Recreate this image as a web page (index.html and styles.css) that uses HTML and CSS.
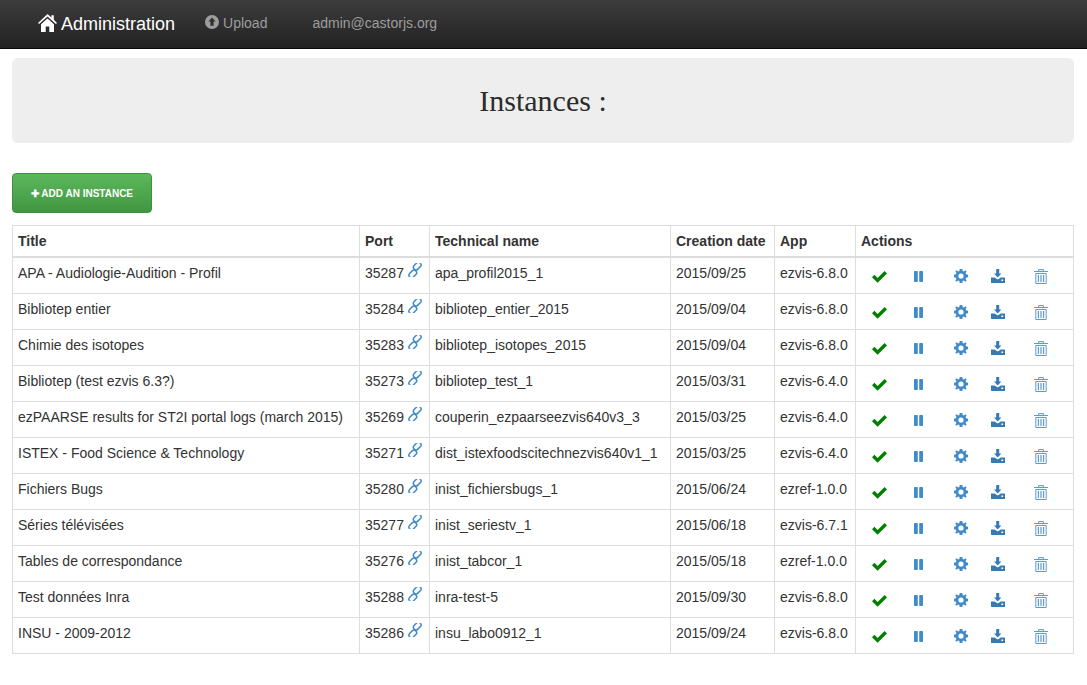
FILE: index.html
```html
<!DOCTYPE html>
<html lang="en">
<head>
    <meta charset="UTF-8">
    <title>Administration</title>
    <link rel="stylesheet" href="styles.css">
</head>
<body>
    <!-- Icon definitions, reused in each table row -->
    <svg class="icon-defs" width="0" height="0">
        <symbol id="i-link" viewBox="0 0 14 14">
            <g fill="none" stroke="currentColor" stroke-width="1.5">
                <rect x="6.6" y="-1.2" width="5.2" height="8.6" rx="2.6" transform="rotate(45 9.2 3.1)"/>
                <rect x="2.2" y="6.6" width="5.2" height="8.6" rx="2.6" transform="rotate(45 4.8 10.9)"/>
            </g>
        </symbol>
        <symbol id="i-check" viewBox="0 0 15 13">
            <path fill="currentColor" d="M0 7.2 2.4 4.8 5.6 8 12.6 1 15 3.4 5.6 12.8Z"/>
        </symbol>
        <symbol id="i-pause" viewBox="0 0 9 11">
            <path fill="currentColor" d="M0 .8Q0 0 .8 0H3Q3.8 0 3.8 .8V10.2Q3.8 11 3 11H.8Q0 11 0 10.2ZM5.2 .8Q5.2 0 6 0H8.2Q9 0 9 .8V10.2Q9 11 8.2 11H6Q5.2 11 5.2 10.2Z"/>
        </symbol>
        <symbol id="i-cog" viewBox="0 0 14 14">
            <path fill="currentColor" fill-rule="evenodd" d="M5.7 0H8.3L8.7 1.9 9.9 2.4 11.5 1.3 12.7 2.5 11.6 4.1 12.1 5.3 14 5.7V8.3L12.1 8.7 11.6 9.9 12.7 11.5 11.5 12.7 9.9 11.6 8.7 12.1 8.3 14H5.7L5.3 12.1 4.1 11.6 2.5 12.7 1.3 11.5 2.4 9.9 1.9 8.7 0 8.3V5.7L1.9 5.3 2.4 4.1 1.3 2.5 2.5 1.3 4.1 2.4 5.3 1.9ZM7 4.4A2.6 2.6 0 1 0 7 9.6 2.6 2.6 0 1 0 7 4.4Z"/>
        </symbol>
        <symbol id="i-download" viewBox="0 0 14 14">
            <path fill="currentColor" fill-rule="evenodd" d="M5.2 0H8.2V4.4H10.4L6.7 8.4 3 4.4H5.2ZM0 8.4H3.6L6.7 10.6 9.8 8.4H14V14H0ZM10.4 10.4V12H12.2V10.4Z"/>
        </symbol>
        <symbol id="i-trash" viewBox="0 0 14 15">
            <g fill="none" stroke="currentColor">
                <path d="M0 2.5H14M4.6 2.5V.6H9.4V2.5"/>
                <path d="M1.8 4.5H12.2V14.5H1.8Z"/>
                <path stroke-width="1.2" d="M4.4 6V13M7 6V13M9.6 6V13"/>
            </g>
        </symbol>
    </svg>

    <nav class="navbar">
        <a class="brand" href="#">
            <svg class="home-icon" viewBox="0 0 19 18"><path fill="currentColor" d="M9.5 0 13.4 3.6V1.2H15.8V5.8L19 8.9 17.9 10 9.5 2.4 1.1 10 0 8.9ZM3 10.2 9.5 4.4 16 10.2V18H11.3V12.6H7.7V18H3Z"/></svg>
            Administration
        </a>
        <a class="nav-link upload" href="#">
            <svg class="upload-icon" viewBox="0 0 14 14"><path fill="currentColor" fill-rule="evenodd" d="M7 0A7 7 0 1 0 7 14 7 7 0 1 0 7 0ZM7 2.4 10.6 6.6H8.6V10.8H5.4V6.6H3.4Z"/></svg>
            Upload
        </a>
        <a class="nav-link" href="#">admin@castorjs.org</a>
    </nav>

    <div class="jumbotron">
        <h1>Instances :</h1>
    </div>

    <button class="btn-add"><span class="plus">✚</span> Add an instance</button>

    <table class="instances">
        <thead>
            <tr>
                <th class="col-title">Title</th>
                <th class="col-port">Port</th>
                <th class="col-name">Technical name</th>
                <th class="col-date">Creation date</th>
                <th class="col-app">App</th>
                <th>Actions</th>
            </tr>
        </thead>
        <tbody>
            <tr>
                <td>APA - Audiologie-Audition - Profil</td>
                <td>35287 <a href="#"><svg class="link-icon"><use href="#i-link"/></svg></a></td>
                <td>apa_profil2015_1</td>
                <td>2015/09/25</td>
                <td>ezvis-6.8.0</td>
                <td><div class="actions"><svg class="a-check"><use href="#i-check"/></svg><svg class="a-pause"><use href="#i-pause"/></svg><svg class="a-cog"><use href="#i-cog"/></svg><svg class="a-download"><use href="#i-download"/></svg><svg class="a-trash"><use href="#i-trash"/></svg></div></td>
            </tr>
            <tr>
                <td>Bibliotep entier</td>
                <td>35284 <a href="#"><svg class="link-icon"><use href="#i-link"/></svg></a></td>
                <td>bibliotep_entier_2015</td>
                <td>2015/09/04</td>
                <td>ezvis-6.8.0</td>
                <td><div class="actions"><svg class="a-check"><use href="#i-check"/></svg><svg class="a-pause"><use href="#i-pause"/></svg><svg class="a-cog"><use href="#i-cog"/></svg><svg class="a-download"><use href="#i-download"/></svg><svg class="a-trash"><use href="#i-trash"/></svg></div></td>
            </tr>
            <tr>
                <td>Chimie des isotopes</td>
                <td>35283 <a href="#"><svg class="link-icon"><use href="#i-link"/></svg></a></td>
                <td>bibliotep_isotopes_2015</td>
                <td>2015/09/04</td>
                <td>ezvis-6.8.0</td>
                <td><div class="actions"><svg class="a-check"><use href="#i-check"/></svg><svg class="a-pause"><use href="#i-pause"/></svg><svg class="a-cog"><use href="#i-cog"/></svg><svg class="a-download"><use href="#i-download"/></svg><svg class="a-trash"><use href="#i-trash"/></svg></div></td>
            </tr>
            <tr>
                <td>Bibliotep (test ezvis 6.3?)</td>
                <td>35273 <a href="#"><svg class="link-icon"><use href="#i-link"/></svg></a></td>
                <td>bibliotep_test_1</td>
                <td>2015/03/31</td>
                <td>ezvis-6.4.0</td>
                <td><div class="actions"><svg class="a-check"><use href="#i-check"/></svg><svg class="a-pause"><use href="#i-pause"/></svg><svg class="a-cog"><use href="#i-cog"/></svg><svg class="a-download"><use href="#i-download"/></svg><svg class="a-trash"><use href="#i-trash"/></svg></div></td>
            </tr>
            <tr>
                <td>ezPAARSE results for ST2I portal logs (march 2015)</td>
                <td>35269 <a href="#"><svg class="link-icon"><use href="#i-link"/></svg></a></td>
                <td>couperin_ezpaarseezvis640v3_3</td>
                <td>2015/03/25</td>
                <td>ezvis-6.4.0</td>
                <td><div class="actions"><svg class="a-check"><use href="#i-check"/></svg><svg class="a-pause"><use href="#i-pause"/></svg><svg class="a-cog"><use href="#i-cog"/></svg><svg class="a-download"><use href="#i-download"/></svg><svg class="a-trash"><use href="#i-trash"/></svg></div></td>
            </tr>
            <tr>
                <td>ISTEX - Food Science &amp; Technology</td>
                <td>35271 <a href="#"><svg class="link-icon"><use href="#i-link"/></svg></a></td>
                <td>dist_istexfoodscitechnezvis640v1_1</td>
                <td>2015/03/25</td>
                <td>ezvis-6.4.0</td>
                <td><div class="actions"><svg class="a-check"><use href="#i-check"/></svg><svg class="a-pause"><use href="#i-pause"/></svg><svg class="a-cog"><use href="#i-cog"/></svg><svg class="a-download"><use href="#i-download"/></svg><svg class="a-trash"><use href="#i-trash"/></svg></div></td>
            </tr>
            <tr>
                <td>Fichiers Bugs</td>
                <td>35280 <a href="#"><svg class="link-icon"><use href="#i-link"/></svg></a></td>
                <td>inist_fichiersbugs_1</td>
                <td>2015/06/24</td>
                <td>ezref-1.0.0</td>
                <td><div class="actions"><svg class="a-check"><use href="#i-check"/></svg><svg class="a-pause"><use href="#i-pause"/></svg><svg class="a-cog"><use href="#i-cog"/></svg><svg class="a-download"><use href="#i-download"/></svg><svg class="a-trash"><use href="#i-trash"/></svg></div></td>
            </tr>
            <tr>
                <td>Séries télévisées</td>
                <td>35277 <a href="#"><svg class="link-icon"><use href="#i-link"/></svg></a></td>
                <td>inist_seriestv_1</td>
                <td>2015/06/18</td>
                <td>ezvis-6.7.1</td>
                <td><div class="actions"><svg class="a-check"><use href="#i-check"/></svg><svg class="a-pause"><use href="#i-pause"/></svg><svg class="a-cog"><use href="#i-cog"/></svg><svg class="a-download"><use href="#i-download"/></svg><svg class="a-trash"><use href="#i-trash"/></svg></div></td>
            </tr>
            <tr>
                <td>Tables de correspondance</td>
                <td>35276 <a href="#"><svg class="link-icon"><use href="#i-link"/></svg></a></td>
                <td>inist_tabcor_1</td>
                <td>2015/05/18</td>
                <td>ezref-1.0.0</td>
                <td><div class="actions"><svg class="a-check"><use href="#i-check"/></svg><svg class="a-pause"><use href="#i-pause"/></svg><svg class="a-cog"><use href="#i-cog"/></svg><svg class="a-download"><use href="#i-download"/></svg><svg class="a-trash"><use href="#i-trash"/></svg></div></td>
            </tr>
            <tr>
                <td>Test données Inra</td>
                <td>35288 <a href="#"><svg class="link-icon"><use href="#i-link"/></svg></a></td>
                <td>inra-test-5</td>
                <td>2015/09/30</td>
                <td>ezvis-6.8.0</td>
                <td><div class="actions"><svg class="a-check"><use href="#i-check"/></svg><svg class="a-pause"><use href="#i-pause"/></svg><svg class="a-cog"><use href="#i-cog"/></svg><svg class="a-download"><use href="#i-download"/></svg><svg class="a-trash"><use href="#i-trash"/></svg></div></td>
            </tr>
            <tr>
                <td>INSU - 2009-2012</td>
                <td>35286 <a href="#"><svg class="link-icon"><use href="#i-link"/></svg></a></td>
                <td>insu_labo0912_1</td>
                <td>2015/09/24</td>
                <td>ezvis-6.8.0</td>
                <td><div class="actions"><svg class="a-check"><use href="#i-check"/></svg><svg class="a-pause"><use href="#i-pause"/></svg><svg class="a-cog"><use href="#i-cog"/></svg><svg class="a-download"><use href="#i-download"/></svg><svg class="a-trash"><use href="#i-trash"/></svg></div></td>
            </tr>
        </tbody>
    </table>
</body>
</html>
```

FILE: styles.css
```css
/* Base */
body {
    margin: 0;
    font-family: "Liberation Sans", Arial, sans-serif;
    font-size: 14px;
    line-height: 20px;
    color: #333;
    background-color: #fff;
}

a {
    color: inherit;
    text-decoration: none;
}

.icon-defs {
    position: absolute;
}

/* Navbar */
.navbar {
    display: flex;
    align-items: flex-start;
    height: 48px;
    padding-left: 38px;
    background: linear-gradient(to bottom, #3c3c3c, #222);
    border-bottom: 1px solid #080808;
}

.brand {
    display: flex;
    align-items: center;
    gap: 4px;
    margin-top: 14px;
    color: #fff;
    font-size: 18px;
}

.home-icon {
    width: 19px;
    height: 18px;
    margin-top: -3px;
}

.nav-link {
    margin-top: 13px;
    margin-left: 30px;
    color: #9d9d9d;
}

.upload {
    display: flex;
    align-items: center;
    gap: 4px;
    margin-right: 15px;
}

.upload-icon {
    width: 14px;
    height: 14px;
    margin-top: -2px;
}

/* Page header */
.jumbotron {
    margin: 9px 13px 30px 12px;
    height: 85px;
    background-color: #eee;
    border-radius: 6px;
    display: flex;
    align-items: center;
    justify-content: center;
}

h1 {
    margin: 0;
    font-family: "Liberation Serif", serif;
    font-size: 30px;
    font-weight: normal;
    color: #2b2b2b;
}

/* Add button */
.btn-add {
    display: block;
    width: 140px;
    height: 40px;
    margin: 0 0 12px 12px;
    padding: 0;
    font-family: inherit;
    font-size: 10px;
    font-weight: bold;
    text-transform: uppercase;
    color: #fff;
    background: linear-gradient(to bottom, #5cb85c, #419641);
    border: 1px solid #3e8f3e;
    border-radius: 4px;
}

.plus {
    font-size: 10px;
}

/* Instances table */
.instances {
    width: 1062px;
    margin-left: 12px;
    border-collapse: collapse;
    table-layout: fixed;
}

.instances th,
.instances td {
    padding: 5px;
    text-align: left;
    vertical-align: top;
    border: 1px solid #ddd;
}

.instances th {
    height: 20px;
    font-weight: bold;
    border-bottom-width: 2px;
}

.instances td {
    height: 25px;
}

.col-title { width: 336px; }
.col-port { width: 59px; }
.col-name { width: 230px; }
.col-date { width: 93px; }
.col-app { width: 70px; }

.link-icon {
    width: 14px;
    height: 14px;
    color: #428bca;
    vertical-align: 1px;
}

/* Action icons: spacing is uneven, as in the original buttons */
.actions {
    display: flex;
    align-items: center;
    height: 25px;
    padding: 1px 0 0 11px;
    box-sizing: border-box;
}

.a-check {
    width: 15px;
    height: 13px;
    color: #008000;
}

.a-pause {
    width: 9px;
    height: 11px;
    margin-left: 27px;
    color: #428bca;
}

.a-cog {
    width: 14px;
    height: 14px;
    margin-left: 31px;
    color: #428bca;
}

.a-download {
    width: 14px;
    height: 14px;
    margin-left: 23px;
    color: #337ab7;
}

.a-trash {
    width: 14px;
    height: 15px;
    margin-left: 29px;
    color: #5a9bd5;
}
```
